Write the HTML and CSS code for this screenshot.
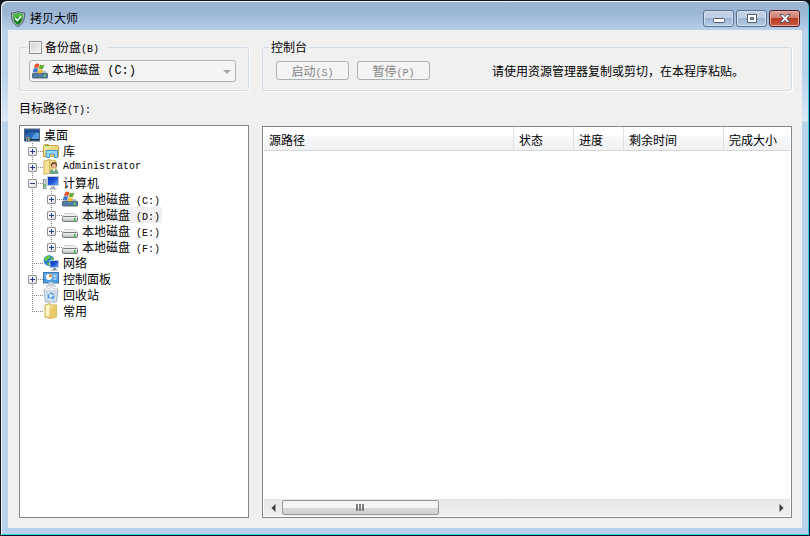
FILE: index.html
```html
<!DOCTYPE html>
<html lang="zh-CN">
    <head>
        <meta charset="UTF-8">
        <meta name="viewport" content="width=device-width, initial-scale=1.0">
        <title>拷贝大师</title>
        <link rel="stylesheet" href="styles.css">
    </head>
    <body>
        <!-- Shared icons -->
        <svg class="sprite" aria-hidden="true">
            <defs>
                <linearGradient id="folder-fill" x1="0" y1="0" x2="1" y2="1">
                    <stop offset="0" stop-color="#fdf3b8"/>
                    <stop offset="1" stop-color="#e2bd4e"/>
                </linearGradient>
                <linearGradient id="screen-fill" x1="0" y1="0" x2="1" y2="1">
                    <stop offset="0" stop-color="#0a2fa8"/>
                    <stop offset="0.5" stop-color="#1c52d8"/>
                    <stop offset="1" stop-color="#79b4f5"/>
                </linearGradient>
                <linearGradient id="disk-fill" x1="0" y1="0" x2="0" y2="1">
                    <stop offset="0" stop-color="#fafafa"/>
                    <stop offset="1" stop-color="#b4b8bb"/>
                </linearGradient>
            </defs>
            <symbol id="icon-drive" viewBox="0 0 16 16">
                <path d="M3 6.5h10l2.500 3.500h-15z" fill="#f1f2f2" stroke="#b3b6b8" stroke-width="0.6"/>
                <rect x="0.5" y="9.5" width="15" height="5" rx="1" fill="url(#disk-fill)" stroke="#777b7e"/>
                <rect x="12" y="11" width="1.6" height="3" fill="#35c435"/>
            </symbol>
            <symbol id="icon-system-drive" viewBox="0 0 16 16">
                <path d="M2.5 8h11l2 2.500H.5z" fill="#aebfca"/>
                <rect x="0.5" y="10.5" width="15" height="4.5" rx="0.5" fill="#4f7da5" stroke="#516779"/>
                <rect x="12" y="11.5" width="1.6" height="2.5" fill="#5de35a"/>
                <path d="M3 1.500c2-1.500 3-1 4.400 0L6.200 5.200c-1.500-1-3-1-4.400 0z" fill="#e2542c"/>
                <path d="M8 1.600c1.500 1 3 1 4.400 0L11.200 5.400c-1.500 1-3 1-4.400 0z" fill="#62ad3a"/>
                <path d="M1.700 5.800c1.500-1 3-1 4.400 0L5 9.600c-1.500-1-3-1-4.400 0z" fill="#3d74cf"/>
                <path d="M6.700 6c1.500 1 3 1 4.400 0L10 9.800c-1.500 1-3 1-4.400 0z" fill="#f4bd30"/>
            </symbol>
            <symbol id="icon-desktop" viewBox="0 0 16 16">
                <rect x="0.5" y="2" width="15" height="12" fill="#2c6cb5" stroke="#4d6377"/>
                <path d="M7 13.500C8 9 11 6 15 4v9.500z" fill="#66b0e8" opacity="0.7"/>
                <path d="M1 3h14v3C10 4 5 5 1 8z" fill="#1c4d99"/>
                <rect x="1" y="12" width="14" height="1.500" fill="#17304f"/>
                <rect x="2" y="10" width="1.500" height="1.500" fill="#ed6136"/>
                <rect x="4" y="10" width="1.500" height="1.500" fill="#8fd03a"/>
                <rect x="2" y="12" width="1.500" height="1.500" fill="#5ab7f4"/>
                <rect x="4" y="12" width="1.500" height="1.500" fill="#f6cd42"/>
            </symbol>
            <symbol id="icon-library" viewBox="0 0 16 16">
                <path d="M.5 2.500l1-1h4l1 1h8l1 1v10H.5z" fill="url(#folder-fill)" stroke="#c9a544"/>
                <rect x="2" y="2" width="4" height="1.200" fill="#63b846"/>
                <path d="M3 7.500h11.500v7h-3v-3.500h-5v3.500H3.500z" fill="#9bd7f6" stroke="#3d95cd"/>
            </symbol>
            <symbol id="icon-user" viewBox="0 0 16 16">
                <path d="M1 2l6-1.500v13L1 15.500z" fill="#f8e59a" stroke="#d1ae50"/>
                <path d="M7 1l6 1v12H7z" fill="url(#folder-fill)" stroke="#d1ae50"/>
                <circle cx="11" cy="6" r="3" fill="#6b4a31"/>
                <circle cx="11" cy="7" r="2.200" fill="#e5b58c"/>
                <path d="M6.500 15c0-4 2-5 4.500-5s4.500 1 4.500 5z" fill="#6fa58b"/>
                <path d="M9.500 10l1.500 2.500L12.500 10z" fill="#fff"/>
            </symbol>
            <symbol id="icon-computer" viewBox="0 0 16 16">
                <rect x="0.500" y="4.500" width="2.500" height="9" fill="#d8dde1" stroke="#87929b"/>
                <rect x="1" y="9" width="1.500" height="3" fill="#57c84f"/>
                <rect x="4.500" y="1.500" width="11" height="9" fill="url(#screen-fill)" stroke="#c1cbd6"/>
                <path d="M8.500 11h3l.5 2h1.500v1.500h-7V13H8z" fill="#a7b2bc"/>
            </symbol>
            <symbol id="icon-network" viewBox="0 0 16 16">
                <circle cx="6" cy="5.500" r="5.300" fill="#2474d4"/>
                <path d="M1.500 3l3-2.500 3 .5-.5 2.500-2.500 1-.5 2.500-2-1zM8 2l3 2-.5 3-2.500-1zM3.500 8l3-.5 1 3-1.500.5z" fill="#62c84a"/>
                <rect x="7" y="5.500" width="8.500" height="7" fill="url(#screen-fill)" stroke="#b8c7dc"/>
                <path d="M10 13h3v1.500h1.500v1h-6v-1H10z" fill="#8496a8"/>
            </symbol>
            <symbol id="icon-control" viewBox="0 0 16 16">
                <rect x="0.500" y="1.500" width="15" height="10.500" fill="#4f9be0" stroke="#3c7bb5"/>
                <rect x="1.500" y="2.500" width="13" height="4" fill="#83bef0" opacity="0.600"/>
                <circle cx="6" cy="6" r="3" fill="#fff"/>
                <path d="M6 6V3a3 3 0 0 1 3 3z" fill="#f18d2f"/>
                <path d="M10.500 5h3M10.500 8h3" stroke="#fff"/>
                <path d="M6 11h4l1 3h2v1.500H3V14h2z" fill="#c4cbd1"/>
            </symbol>
            <symbol id="icon-bin" viewBox="0 0 16 16">
                <path d="M1 2.500h14L13.500 15h-11z" fill="#d8e7f3" stroke="#9db0c0"/>
                <path d="M1 3l3-2.500L6 2l3-2 2 2 3-.5L15 4H1z" fill="#f0f5f8" stroke="#a7b5c1" stroke-width="0.600"/>
                <path d="M4 4.500l1 9.500M12 4.500L11 14" stroke="#b6c9d9"/>
                <circle cx="8" cy="8.800" r="2.600" fill="none" stroke="#4a98e0" stroke-width="1.600" stroke-dasharray="4 1.400"/>
            </symbol>
            <symbol id="icon-folder" viewBox="0 0 16 16">
                <path d="M2 2l5-1.500L8 2h5.500v12l-6 1.500L2 14z" fill="url(#folder-fill)" stroke="#d2ae4a"/>
                <path d="M7.500 15.500V6L10 4.500V2h3.500v12z" fill="#e9ca68"/>
                <path d="M3 3l3-1v11.500l-3-.5z" fill="#fff8cf"/>
            </symbol>
            <symbol id="icon-shield" viewBox="0 0 16 16">
                <path d="M8 .5c2 1.200 4.500 1.500 6.500 1.500.3 7-1.500 11-6.500 13.500C3 13 1.200 9 1.500 2 4 2 6 1.500 8 .5z" fill="#aebbbf" stroke="#4b5a5e"/>
                <path d="M8 2c1.500 1 3.500 1.300 5 1.300C13 9 11.500 12 8 14 4.500 12 3 9 3 3.300 5 3.200 6.500 2.800 8 2z" fill="#12851a"/>
                <path d="M8 2c1.500 1 3.500 1.300 5 1.300 0 1.700-.1 3-.5 4.200-3-1.500-6-1.500-9-.2C3.100 6 3 5 3 3.300 5 3.200 6.500 2.800 8 2z" fill="#4dbb42"/>
                <path d="M5 7l2.300 2.500L11 5.500" fill="none" stroke="#fff" stroke-width="1.800"/>
            </symbol>
        </svg>

        <div class="window">
            <!-- Title bar -->
            <header class="titlebar">
                <svg class="icon"><use href="#icon-shield"/></svg>
                <h1 class="title">拷贝大师</h1>
                <div class="caption-buttons">
                    <button class="caption-button" type="button" aria-label="最小化">
                        <svg width="12" height="12"><rect x="0.5" y="5.500" width="11" height="4" rx="1" fill="#fff" stroke="#535b6b"/></svg>
                    </button>
                    <button class="caption-button" type="button" aria-label="最大化">
                        <svg width="12" height="12"><path d="M1.500 1.500h9v8h-9zM4.500 4.500h3v2h-3z" fill="#fff" fill-rule="evenodd" stroke="#535b6b"/></svg>
                    </button>
                    <button class="caption-button close" type="button" aria-label="关闭">
                        <svg width="12" height="12"><path d="M1 1.500h3l2 2.200 2-2.200h3L7.800 5.500 11 9.500H8L6 7.300 4 9.500H1l3.200-4z" fill="#fff" stroke="#535b6b"/></svg>
                    </button>
                </div>
            </header>

            <main class="client">
                <!-- Left side: disk and target path -->
                <section class="side">
                    <fieldset class="group">
                        <legend class="backup-legend">
                            <input class="checkbox" type="checkbox" id="backup">
                            <label for="backup">备份盘<span class="latin">(B)</span></label>
                        </legend>
                        <div class="combo">
                            <svg class="icon combo-icon"><use href="#icon-system-drive"/></svg>
                            <select class="combo-select" aria-label="备份盘" disabled>
                                <option>本地磁盘 (C:)</option>
                            </select>
                        </div>
                    </fieldset>

                    <h2 class="path-label" id="path-label">目标路径<span class="latin">(T):</span></h2>

                    <div class="tree" aria-labelledby="path-label" role="group">
                        <div class="node root">
                            <svg class="icon"><use href="#icon-desktop"/></svg>
                            <span class="name">桌面</span>
                        </div>
                        <ul class="branch">
                            <li>
                                <div class="node">
                                    <span class="joint"><button class="expander" type="button" aria-label="展开"></button></span>
                                    <svg class="icon"><use href="#icon-library"/></svg>
                                    <span class="name">库</span>
                                </div>
                            </li>
                            <li>
                                <div class="node">
                                    <span class="joint"><button class="expander" type="button" aria-label="展开"></button></span>
                                    <svg class="icon"><use href="#icon-user"/></svg>
                                    <span class="name latin">Administrator</span>
                                </div>
                            </li>
                            <li>
                                <div class="node">
                                    <span class="joint"><button class="expander open" type="button" aria-label="折叠"></button></span>
                                    <svg class="icon"><use href="#icon-computer"/></svg>
                                    <span class="name">计算机</span>
                                </div>
                                <ul class="branch nested">
                                    <li>
                                        <div class="node">
                                            <span class="joint"><button class="expander" type="button" aria-label="展开"></button></span>
                                            <svg class="icon"><use href="#icon-system-drive"/></svg>
                                            <span class="name">本地磁盘<span class="latin"> (C:)</span></span>
                                        </div>
                                    </li>
                                    <li>
                                        <div class="node">
                                            <span class="joint"><button class="expander" type="button" aria-label="展开"></button></span>
                                            <svg class="icon"><use href="#icon-drive"/></svg>
                                            <span class="name selected">本地磁盘<span class="latin"> (D:)</span></span>
                                        </div>
                                    </li>
                                    <li>
                                        <div class="node">
                                            <span class="joint"><button class="expander" type="button" aria-label="展开"></button></span>
                                            <svg class="icon"><use href="#icon-drive"/></svg>
                                            <span class="name">本地磁盘<span class="latin"> (E:)</span></span>
                                        </div>
                                    </li>
                                    <li>
                                        <div class="node">
                                            <span class="joint last"><button class="expander" type="button" aria-label="展开"></button></span>
                                            <svg class="icon"><use href="#icon-drive"/></svg>
                                            <span class="name">本地磁盘<span class="latin"> (F:)</span></span>
                                        </div>
                                    </li>
                                </ul>
                            </li>
                            <li>
                                <div class="node">
                                    <span class="joint"></span>
                                    <svg class="icon"><use href="#icon-network"/></svg>
                                    <span class="name">网络</span>
                                </div>
                            </li>
                            <li>
                                <div class="node">
                                    <span class="joint"><button class="expander" type="button" aria-label="展开"></button></span>
                                    <svg class="icon"><use href="#icon-control"/></svg>
                                    <span class="name">控制面板</span>
                                </div>
                            </li>
                            <li>
                                <div class="node">
                                    <span class="joint"></span>
                                    <svg class="icon"><use href="#icon-bin"/></svg>
                                    <span class="name">回收站</span>
                                </div>
                            </li>
                            <li>
                                <div class="node">
                                    <span class="joint last"></span>
                                    <svg class="icon"><use href="#icon-folder"/></svg>
                                    <span class="name">常用</span>
                                </div>
                            </li>
                        </ul>
                    </div>
                </section>

                <!-- Right side: console and copy list -->
                <section class="content">
                    <fieldset class="group console">
                        <legend class="console-legend">控制台</legend>
                        <div class="console-row">
                            <button class="button" type="button" disabled>启动<span class="latin">(S)</span></button>
                            <button class="button" type="button" disabled>暂停<span class="latin">(P)</span></button>
                            <p class="hint">请使用资源管理器复制或剪切，在本程序粘贴。</p>
                        </div>
                    </fieldset>

                    <div class="list">
                        <table class="table">
                            <thead>
                                <tr>
                                    <th class="col-source">源路径</th>
                                    <th class="col-state">状态</th>
                                    <th class="col-progress">进度</th>
                                    <th class="col-time">剩余时间</th>
                                    <th>完成大小</th>
                                </tr>
                            </thead>
                        </table>
                        <div class="scrollbar">
                            <button class="arrow" type="button" aria-label="向左滚动">
                                <svg width="5" height="8"><path d="M4.500 0v8L.5 4z" fill="#3c3c3c"/></svg>
                            </button>
                            <div class="track">
                                <div class="thumb">
                                    <svg width="9" height="8"><path d="M1 0v7M4 0v7M7 0v7" stroke="#555" stroke-width="1.500"/></svg>
                                </div>
                            </div>
                            <button class="arrow" type="button" aria-label="向右滚动">
                                <svg width="5" height="8"><path d="M.5 0v8l4-4z" fill="#3c3c3c"/></svg>
                            </button>
                        </div>
                    </div>
                </section>
            </main>
        </div>
    </body>
</html>
```
FILE: styles.css
```css
* {
    box-sizing: border-box;
}

body {
    margin: 0;
    background-color: #15151c;
    color: #000;
    font-family: "Noto Sans CJK SC", sans-serif;
    font-size: 12px;
    line-height: 14px;
}

button,
select {
    font-family: inherit;
    font-size: 12px;
    line-height: 14px;
}

.sprite {
    position: absolute;
    width: 0;
    height: 0;
}

.icon {
    display: block;
    flex: none;
    width: 16px;
    height: 16px;
}

.latin {
    font-family: "Liberation Mono", monospace;
    font-size: 10px;
    line-height: 0;
    white-space: pre;
}

/* Window frame */
.window {
    display: flex;
    flex-direction: column;
    min-height: 100vh;
    padding: 0 7px 7px;
    border: 1px solid #15151c;
    border-radius: 7px 7px 0 0;
    background: linear-gradient(#99b4d3 0, #9bb5d5 12px, #b9d1ea 30px, #b9d1ea 70px, #dce8f5 120px, #b9d1ea 121px);
    box-shadow: inset 1px 1px 0 #f2f7fc, inset -1px -1px 0 #33cdec;
}

.titlebar {
    display: flex;
    align-items: center;
    height: 29px;
    padding: 6px 2px 0;
}

.title {
    margin: 0 0 0 4px;
    padding-bottom: 2px;
    font-size: 12px;
    font-weight: normal;
}

.caption-buttons {
    display: flex;
    gap: 2px;
    margin-left: auto;
}

.caption-button {
    display: flex;
    align-items: center;
    justify-content: center;
    width: 31px;
    height: 17px;
    padding: 0;
    border: 1px solid #5d7290;
    border-radius: 3px;
    background: linear-gradient(#c0d1e6 50%, #9bb5d3 50%, #b5cce5);
    box-shadow: inset 0 0 0 1px #d3e0ef;
}

.close {
    border-color: #4f1c23;
    background: linear-gradient(#dba39a 0, #cd7a6b 50%, #b83d24 50%, #c9583d);
    box-shadow: inset 0 0 0 1px #e3b0a8;
}

.client {
    display: flex;
    flex: 1;
    gap: 13px;
    padding: 10px 10px 10px 11px;
    background-color: #f0f0f0;
}

.side {
    display: flex;
    flex-direction: column;
    width: 230px;
}

.content {
    display: flex;
    flex: 1;
    flex-direction: column;
    gap: 35px;
    min-width: 0;
}

/* Group boxes */
.group {
    min-width: 0;
    margin: 0;
    padding: 6px 12px 8px 9px;
    border: 1px solid #d0dde8;
    border-radius: 3px;
    box-shadow: 1px 1px 0 #fff;
}

.backup-legend {
    display: flex;
    align-items: center;
    gap: 3px;
    padding: 0 9px 0 0;
}

.checkbox {
    width: 13px;
    height: 13px;
    margin: 0;
    border: 1px solid #8e8f8f;
    background: linear-gradient(135deg, #cdd1d5, #f6f6f6);
    box-shadow: inset 0 0 0 1px #f4f4f4;
    appearance: none;
}

.combo {
    position: relative;
}

.combo-icon {
    position: absolute;
    top: 3px;
    left: 3px;
}

.combo::after {
    content: "";
    position: absolute;
    top: 10px;
    right: 5px;
    border: 4px solid transparent;
    border-top-color: #a5a5a5;
    border-bottom: 0;
}

.combo-select {
    display: block;
    width: 100%;
    height: 22px;
    padding: 0 20px 0 22px;
    border: 1px solid #adb2b5;
    border-radius: 3px;
    background-color: #f4f4f4;
    color: #000;
    font-family: "Liberation Mono", "Noto Sans CJK SC", monospace;
    opacity: 1;
    appearance: none;
}

.console {
    padding: 7px 6px 10px;
}

.console-legend {
    padding: 0 2px;
}

.console-row {
    display: flex;
    align-items: center;
    gap: 8px;
    padding-left: 7px;
}

.button {
    width: 73px;
    height: 19px;
    padding: 0;
    border: 1px solid #adb2b5;
    border-radius: 3px;
    background-color: #f4f4f4;
    color: #838383;
}

.hint {
    margin: 0 0 0 54px;
}

.path-label {
    margin: 0;
    padding: 10px 0;
    font-size: 12px;
    font-weight: normal;
}

/* Tree */
.tree {
    flex: 1;
    padding: 1px 3px;
    border: 1px solid #828790;
    background-color: #fff;
}

.branch {
    margin: 0;
    padding: 0;
    list-style: none;
}

.nested {
    padding-left: 19px;
    background: repeating-linear-gradient(#808080 0 1px, transparent 1px 2px) 9px 0 / 1px 100% no-repeat;
}

.node {
    display: flex;
    align-items: center;
    height: 16px;
}

.root {
    padding-left: 1px;
}

.joint {
    display: flex;
    align-items: center;
    flex: none;
    width: 20px;
    height: 16px;
    padding-left: 5px;
    background:
        repeating-linear-gradient(#808080 0 1px, transparent 1px 2px) 9px 0 / 1px 16px no-repeat,
        repeating-linear-gradient(90deg, #808080 0 1px, transparent 1px 2px) 9px 8px / 11px 1px no-repeat;
}

.last {
    background-size: 1px 8px, 11px 1px;
}

.expander {
    width: 9px;
    height: 9px;
    padding: 0;
    border: 1px solid #919191;
    border-radius: 1px;
    background:
        linear-gradient(#28418c, #28418c) center / 5px 1px no-repeat,
        linear-gradient(#28418c, #28418c) center / 1px 5px no-repeat,
        linear-gradient(135deg, #fff, #dedede);
}

.open {
    background:
        linear-gradient(#28418c, #28418c) center / 5px 1px no-repeat,
        linear-gradient(135deg, #fff, #dedede);
}

.name {
    margin-left: 3px;
    padding: 0 2px 0 1px;
    line-height: 16px;
}

.selected {
    background-color: #f0f0f0;
}

/* Copy list */
.list {
    display: flex;
    flex: 1;
    flex-direction: column;
    padding: 0 1px 1px;
    border: 1px solid #828790;
    background-color: #fff;
}

.table {
    width: 100%;
    border-collapse: separate;
    border-spacing: 0;
    table-layout: fixed;
}

.table th {
    height: 24px;
    padding: 3px 0 0 5px;
    border-right: 1px solid #dfe0e1;
    border-bottom: 1px solid #d5d5d5;
    background: linear-gradient(#fff 40%, #f7f8fa 41%, #f1f2f4);
    font-weight: normal;
    text-align: left;
}

.table th:last-child {
    border-right: 0;
}

.col-source {
    width: 250px;
}

.col-state {
    width: 60px;
}

.col-progress {
    width: 50px;
}

.col-time {
    width: 100px;
}

.scrollbar {
    display: flex;
    height: 17px;
    margin-top: auto;
    border-top: 1px solid #e3e3e3;
    background: linear-gradient(#e8e8e8, #efefef);
}

.arrow {
    display: flex;
    align-items: center;
    justify-content: center;
    width: 18px;
    padding: 0;
    border: 0;
    background: none;
}

.track {
    flex: 1;
}

.thumb {
    display: flex;
    align-items: center;
    justify-content: center;
    width: 157px;
    height: 15px;
    border: 1px solid #979797;
    border-radius: 2px;
    background: linear-gradient(#f5f5f5 50%, #d8d9db 51%, #cfd1d3);
}
```
